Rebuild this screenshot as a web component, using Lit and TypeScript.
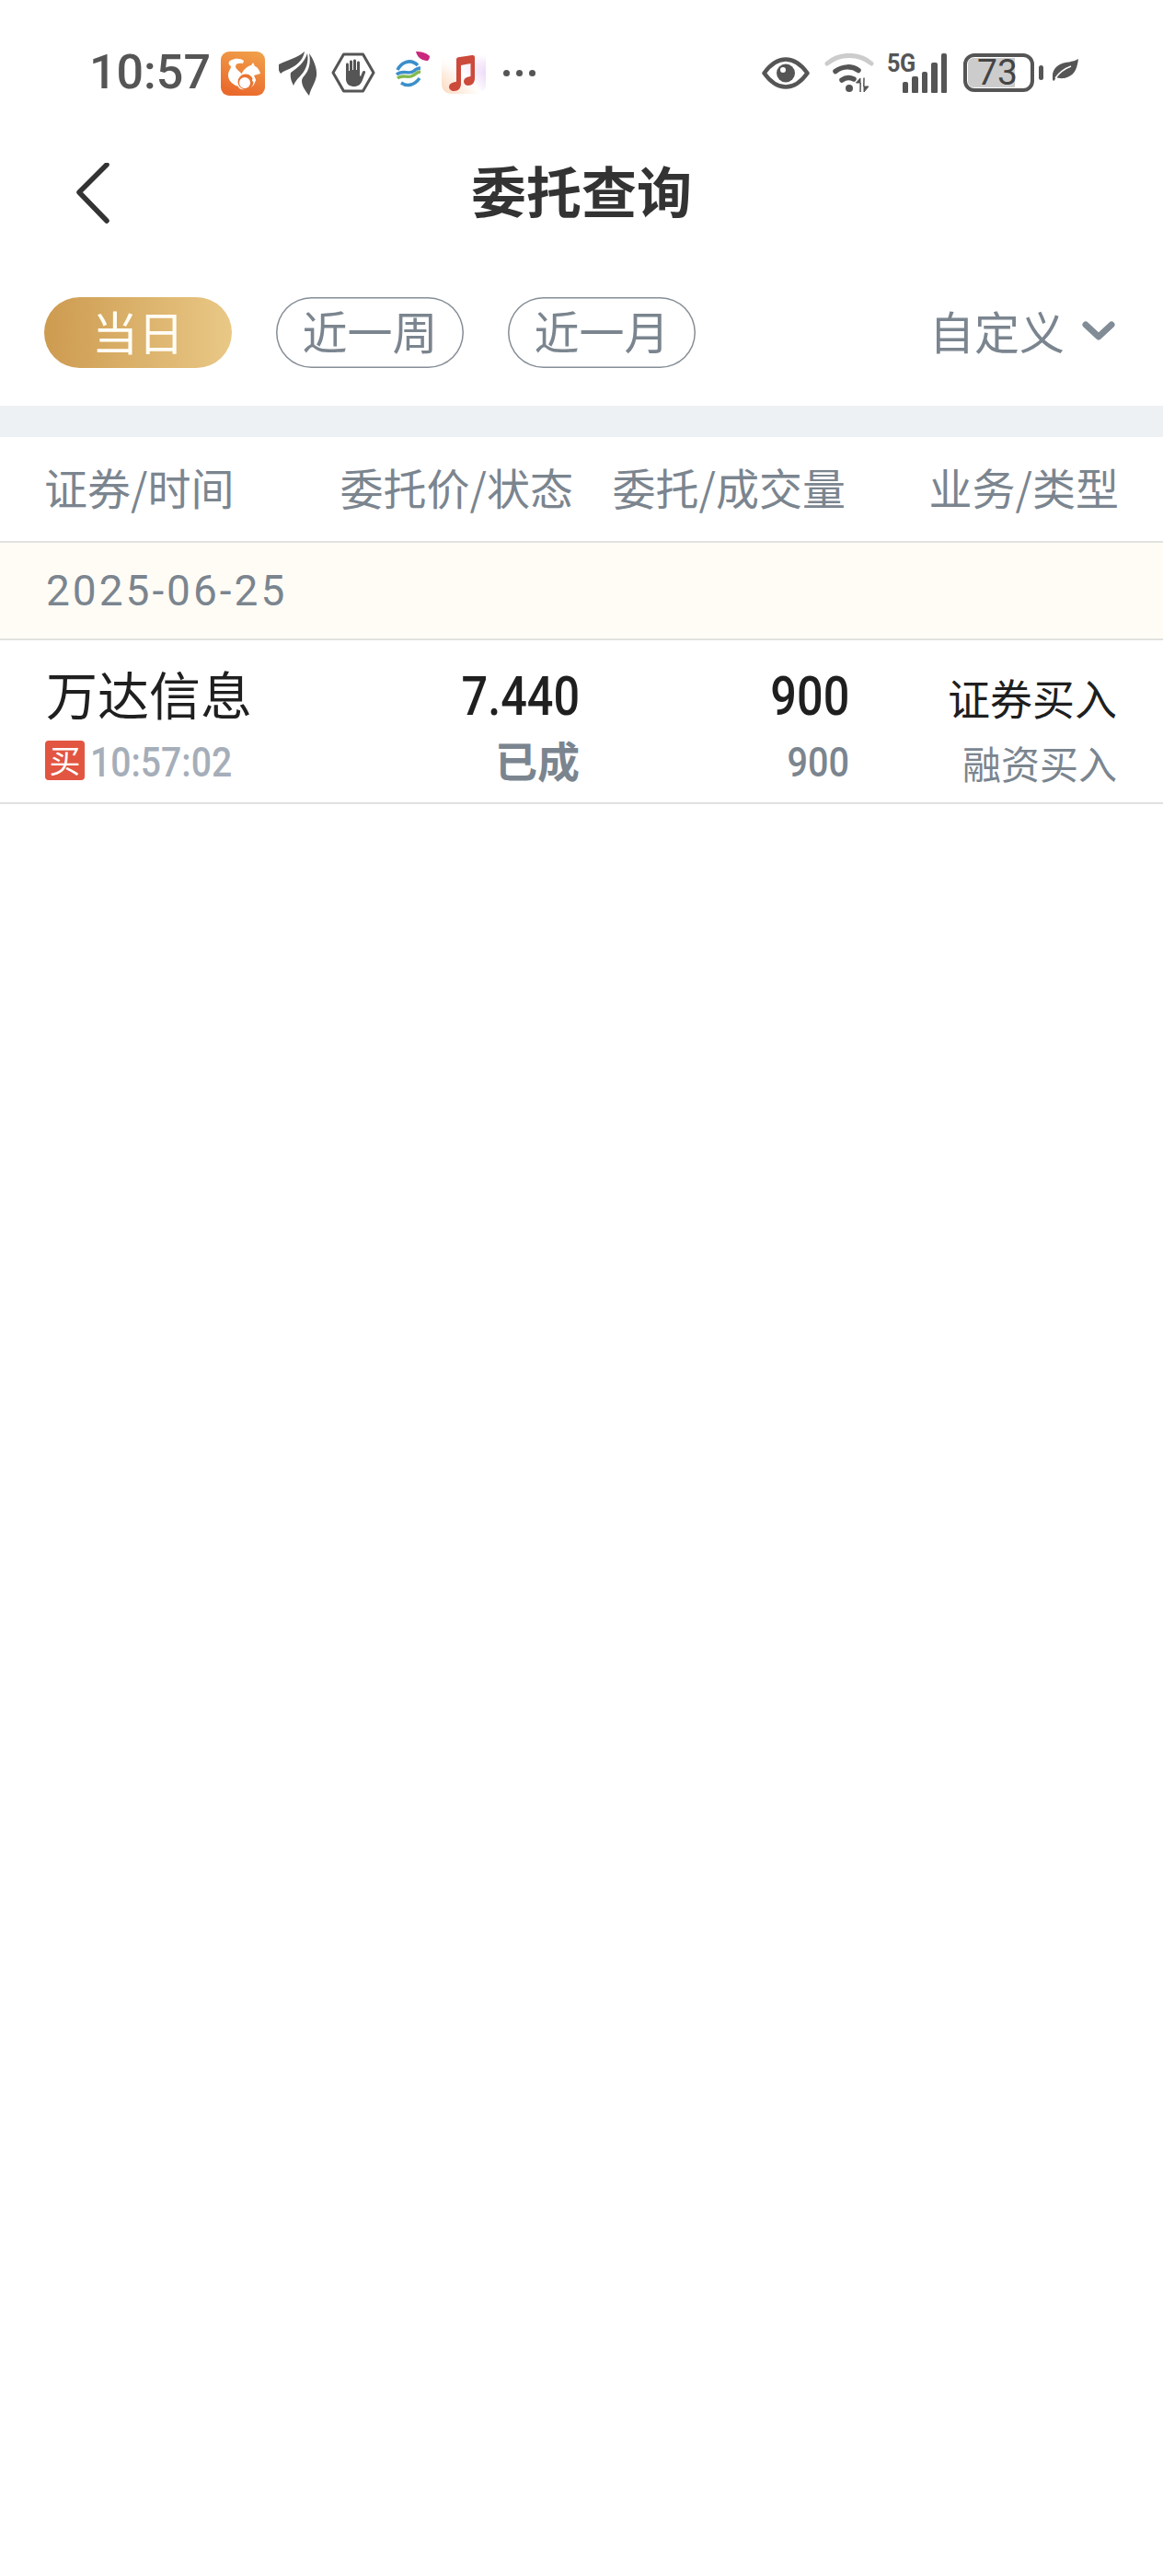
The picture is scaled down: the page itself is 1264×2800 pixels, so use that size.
import { LitElement, html, css } from "lit";
import { customElement } from "lit/decorators.js";

const bars = [12, 18, 23, 33, 43];

@customElement("app-root")
export class AppRoot extends LitElement {
  static styles = css`
    :host { display: block; width: 1264px; height: 2800px; background: #fff; font-family: "Noto Sans CJK SC", Roboto, sans-serif; color: #1f1f1f; overflow: hidden; }
    svg { display: block; flex: none; }
    .status { height: 158px; box-sizing: border-box; padding: 0 92px 0 97px; display: flex; align-items: center; justify-content: space-between; }
    .st-left, .st-right { display: flex; align-items: center; }
    .time { width: 143px; font: 500 52px/1 Roboto, sans-serif; color: #555; }
    .uc { margin-top: 2px; }
    .feather { margin: 2px 0 0 15px; }
    .hand { margin: 0 0 0 15px; }
    .mobile { margin: -8px 0 0 20px; }
    .music { margin: 4px 0 0 12px; }
    .dots { display: flex; gap: 7px; margin-left: 19px; }
    .dots i { width: 7px; height: 7px; border-radius: 50%; background: #555; }
    .wifi { margin-left: 16px; }
    .sig { position: relative; width: 65px; height: 43px; margin-left: 14px; }
    .sig5 { position: absolute; left: 0; top: -3px; font: 700 28px/1 Roboto, sans-serif; color: #555; letter-spacing: -.5px; transform: scaleX(.9); transform-origin: left; }
    .sig-bars { position: absolute; right: 0; bottom: 0; display: flex; align-items: flex-end; gap: 4px; }
    .sig-bars i { width: 6.500px; background: #555; border-radius: 2px 2px 1px 1px; }
    .batt { width: 77px; height: 42px; margin: -1px 0 0 18px; box-sizing: border-box; border: 4px solid #555; border-radius: 12px; padding: 1px; display: flex; }
    .batt-fill { width: 51px; background: #ccc; border-radius: 6px 0 0 6px; font: 400 39px/32px Roboto, sans-serif; color: #444; white-space: nowrap; padding-left: 10px; box-sizing: border-box; overflow: visible; }
    .batt-tip { width: 5px; height: 16px; margin-left: 5px; background: #555; border-radius: 2.500px; }
    .leaf { margin: -6px 0 0 10px; }
    .nav { height: 102px; box-sizing: border-box; padding-bottom: 6px; display: flex; align-items: center; justify-content: center; position: relative; }
    .nav h1 { margin: 0; font: 700 60px/1 "Noto Sans CJK SC", sans-serif; color: #333; }
    .back { position: absolute; left: 80px; top: 19px; }
    .tabs { height: 181px; box-sizing: border-box; padding: 63px 52px 0 48px; display: flex; align-items: flex-start; }
    .pill { width: 204px; height: 77px; box-sizing: border-box; padding-bottom: 6px; border-radius: 39px; display: flex; align-items: center; justify-content: center; font-size: 49px; line-height: 1; box-shadow: inset 0 0 0 1.500px #858d96; color: #7b858f; margin-right: 48px; }
    .pill.on { box-shadow: none; color: #fffdf5; font-size: 50px; background: linear-gradient(90deg, #cd9b50, #e9c886); }
    .custom { margin-left: auto; display: flex; align-items: center; gap: 19px; height: 71px; font-size: 49px; line-height: 1; color: #7b858f; }
    .custom svg { margin-top: 3px; }
    .band { height: 34px; background: #eef1f4; }
    .grid { display: grid; grid-template-columns: 300px 282px 293px 1fr; padding: 0 48px; }
    .head { height: 107px; padding-bottom: 6px; align-items: center; font-size: 47px; line-height: 1; color: #7b858f; border-bottom: 2px solid #e2e2df; box-sizing: content-box; }
    .head > div, .row > div { text-align: right; white-space: nowrap; }
    .head > div:first-child, .row > div:first-child { text-align: left; }
    .h2 { transform: translateX(-7px); }
    .h3 { transform: translateX(-4px); }
    .date { height: 104px; background: #fffcf6; border-bottom: 2px solid #e2e2df; padding-left: 50px; display: flex; align-items: center; font: 400 46px/1 Roboto, sans-serif; letter-spacing: 3px; color: #7b858f; }
    .row { grid-template-rows: 84px 50px; padding-top: 19px; box-sizing: border-box; height: 178px; border-bottom: 2px solid #e0e0de; align-content: start; align-items: center; }
    .row > .name { font-size: 56px; line-height: 1; color: #1f1f1f; padding: 0 0 8px 2px; }
    .num { display: inline-block; font: 500 60px/1 Roboto, sans-serif; color: #1f1f1f; transform: scaleX(.84); transform-origin: right; }
    .num2 { display: inline-block; font: 500 44px/1 Roboto, sans-serif; color: #7b858f; transform: translateY(5px) scaleX(.9); transform-origin: right; }
    .type { font-size: 46px; line-height: 1; color: #1f1f1f; padding-right: 2px; }
    .sub { font-size: 42px; line-height: 1; color: #7b858f; padding: 10px 2px 0 0; }
    .state { font-size: 46px; line-height: 1; font-weight: 700; color: #7b858f; padding-top: 2px; }
    .tm { display: flex; align-items: center; gap: 6px; }
    .tag { width: 43px; height: 43px; margin-left: 1px; background: #e25541; border-radius: 4px; color: #fff; font-size: 34px; line-height: 41px; text-align: center; flex: none; transform: translateY(2px); }
    .clock { font: 500 44px/1 Roboto, sans-serif; color: #a5aeb9; display: inline-block; transform: translateY(5px) scaleX(.89); transform-origin: left; }
  `;

  render() {
    return html`
      <div class="status">
        <div class="st-left">
          <span class="time">10:57</span>
          <svg class="uc" width="48" height="48" viewBox="0 0 48 48">
            <defs><linearGradient id="ucg" x1="0.8" y1="0" x2="0.5" y2="1"><stop offset="0" stop-color="#f0a04a"/><stop offset="1" stop-color="#ea6a2c"/></linearGradient></defs>
            <rect width="48" height="48" rx="9" fill="url(#ucg)"/>
            <path d="M9 11c4-4 12-4 16-1l-1 3c-4-1-8 0-8 3 0 4 7 6 8 11-3 3-5 7-4 11-6-1-12-6-12-12 0-5 3-7 3-10-2-1-3-3-2-5z" fill="#fff"/>
            <path d="M22 27c1-6 6-11 11-12l2-3 2 4c3 1 5 4 6 8l-7 2c2 3 2 7 0 10-3 4-9 6-14 5-3-1-4-4-3-7 1-3 2-5 3-7z" fill="#fff"/>
            <circle cx="27" cy="33" r="8.500" fill="#ea7433"/><circle cx="26" cy="34" r="6" fill="#fff"/>
            <circle cx="36" cy="31" r="2" fill="#fff"/>
          </svg>
          <svg class="feather" width="42" height="48" viewBox="0 0 42 48" fill="#555">
            <path d="M0 14C10 9 20 7 28 0C27 7 22 13 15 17C10 20 5 21 2 24C0 22-1 18 0 14z"/>
            <path d="M13 23C20 18 28 12 31 2C33 12 29 21 23 27C19 31 17 34 16 37C14 33 12 28 13 23z"/>
            <path d="M33 2C37 7 42 18 41 26C40 34 35 39 33 48C30 44 25 38 25 32C25 30 26 28 28 26C33 20 35 12 33 2z"/>
          </svg>
          <svg class="hand" width="48" height="44" viewBox="0 0 48 44">
            <path d="M13.500 2h21l11.500 20-11.500 20h-21L2 22z" fill="none" stroke="#555" stroke-width="3" stroke-linejoin="round"/>
            <path d="M16 13c0-2 3-2 3 0v7h1V10c0-2 3-2 3 0v9h1V9c0-2 3-2 3 0v10h1v-8c0-2 3-2 3 0v14l1 1 2-5c1-2 4-1 3 1l-3 8c-2 5-5 7-9 7-5 0-8-2-9-7z" fill="#555"/>
          </svg>
          <svg class="mobile" width="40" height="40" viewBox="0 0 40 40" fill="none">
            <path d="M24 1c5 0 11 1 15 5 0 2-1 4-2 5-5 0-11-2-13-10z" fill="#c9297c"/>
            <path d="M15 10L30 25 15 40 0 25z" fill="#fff"/>
            <path d="M4 21C8 13 18 8 26 16" stroke="#3b8fcb" stroke-width="3.600"/>
            <path d="M3 26C10 20 17 27 22 22c2-2 4-3 7-3" stroke="#3b8fcb" stroke-width="3.400"/>
            <path d="M4 30c6-5 12 1 17-3 3-2 5-4 8-4" stroke="#83b94e" stroke-width="3.400"/>
            <path d="M8 35c7 5 15 2 20-5" stroke="#3b8fcb" stroke-width="3.400"/>
          </svg>
          <svg class="music" width="48" height="42" viewBox="0 0 48 42">
            <defs><linearGradient id="mg" x1="0" y1="1" x2="1" y2="0.2"><stop offset="0" stop-color="#fbd9bd"/><stop offset="0.55" stop-color="#fff"/><stop offset="1" stop-color="#e6cdf5"/></linearGradient>
            <linearGradient id="mf" x1="0" y1="0" x2="0" y2="1"><stop offset="0" stop-color="#fff"/><stop offset="1" stop-color="#fff" stop-opacity="0"/></linearGradient></defs>
            <path d="M0 0h48v32a10 10 0 0 1-10 10H10A10 10 0 0 1 0 32z" fill="url(#mg)"/>
            <path d="M0 0h48v20H0z" fill="url(#mf)"/>
            <path d="M16 4.500c0-1 1-2 2-2.200L33 0c2-.2 3 1 3 2.500V25c0 5-3 8-7 8-3 0-5-2-5-4.500s2-4.500 5-5l2.500-.5V9L21 11v20c0 5-3 8-7.500 8-3 0-5.500-2-5.500-4.500s2-4.500 5-5l3-.7z" fill="#cc4a3b"/>
          </svg>
          <span class="dots"><i></i><i></i><i></i></span>
        </div>
        <div class="st-right">
          <svg width="52" height="35" viewBox="0 0 52 35" fill="none">
            <path d="M2.500 17.500C10 7 18 2.500 26 2.500s16 4.500 23.500 15C42 28 34 32.500 26 32.500S10 28 2.500 17.500z" stroke="#555" stroke-width="4.500" stroke-linejoin="round"/>
            <circle cx="26" cy="17.500" r="10" fill="#555"/><circle cx="23" cy="14" r="3" fill="#fff"/>
          </svg>
          <svg class="wifi" width="54" height="42" viewBox="0 0 54 42" fill="none" stroke-linecap="round">
            <path d="M3 11C16-.5 38-.5 51 11" stroke="#ccc" stroke-width="5"/>
            <path d="M12 19.500c8-6 18-6 25-1" stroke="#555" stroke-width="5.500"/>
            <path d="M19 29c4-3 9-3 13-1" stroke="#555" stroke-width="5.500"/>
            <circle cx="27" cy="38" r="4" fill="#555"/>
            <path d="M39 42V27l-4.500 5h4.500zM43 27v15l5-6h-5z" fill="#555" stroke="#555" stroke-width="1" stroke-linejoin="round"/>
          </svg>
          <div class="sig"><span class="sig5">5G</span>
            <div class="sig-bars">${bars.map(h => html`<i style="height:${h}px"></i>`)}</div>
          </div>
          <div class="batt"><div class="batt-fill">73</div></div>
          <div class="batt-tip"></div>
          <svg class="leaf" width="28" height="24" viewBox="0 0 28 24">
            <path d="M28 0C27 8 25 17 16 20C11 22 6 21 4 20L1.500 24C.5 23.500 0 23 0 22C-1 15 2 9 8 6C14 3 22 4 28 0z" fill="#555"/>
            <path d="M3 21C7 15 12 11 20 8" fill="none" stroke="#fff" stroke-width="1.400"/>
          </svg>
        </div>
      </div>
      <div class="nav">
        <svg class="back" width="42" height="66" viewBox="0 0 42 66" fill="none"><path d="M36 2L6 32l30 31" stroke="#333" stroke-width="5.500" stroke-linecap="round" stroke-linejoin="round"/></svg>
        <h1>委托查询</h1>
      </div>
      <div class="tabs">
        <div class="pill on">当日</div>
        <div class="pill">近一周</div>
        <div class="pill">近一月</div>
        <div class="custom">自定义
          <svg width="36" height="22" viewBox="0 0 36 22" fill="none"><path d="M4 4l14 13L32 4" stroke="#828c97" stroke-width="7" stroke-linecap="round" stroke-linejoin="round"/></svg>
        </div>
      </div>
      <div class="band"></div>
      <div class="grid head">
        <div>证券/时间</div><div class="h2">委托价/状态</div><div class="h3">委托/成交量</div><div>业务/类型</div>
      </div>
      <div class="date">2025-06-25</div>
      <div class="grid row">
        <div class="name">万达信息</div>
        <div><span class="num">7.440</span></div>
        <div><span class="num">900</span></div>
        <div class="type">证券买入</div>
        <div class="tm"><span class="tag">买</span><span class="clock">10:57:02</span></div>
        <div class="state">已成</div>
        <div><span class="num2">900</span></div>
        <div class="sub">融资买入</div>
      </div>
    `;
  }
}
